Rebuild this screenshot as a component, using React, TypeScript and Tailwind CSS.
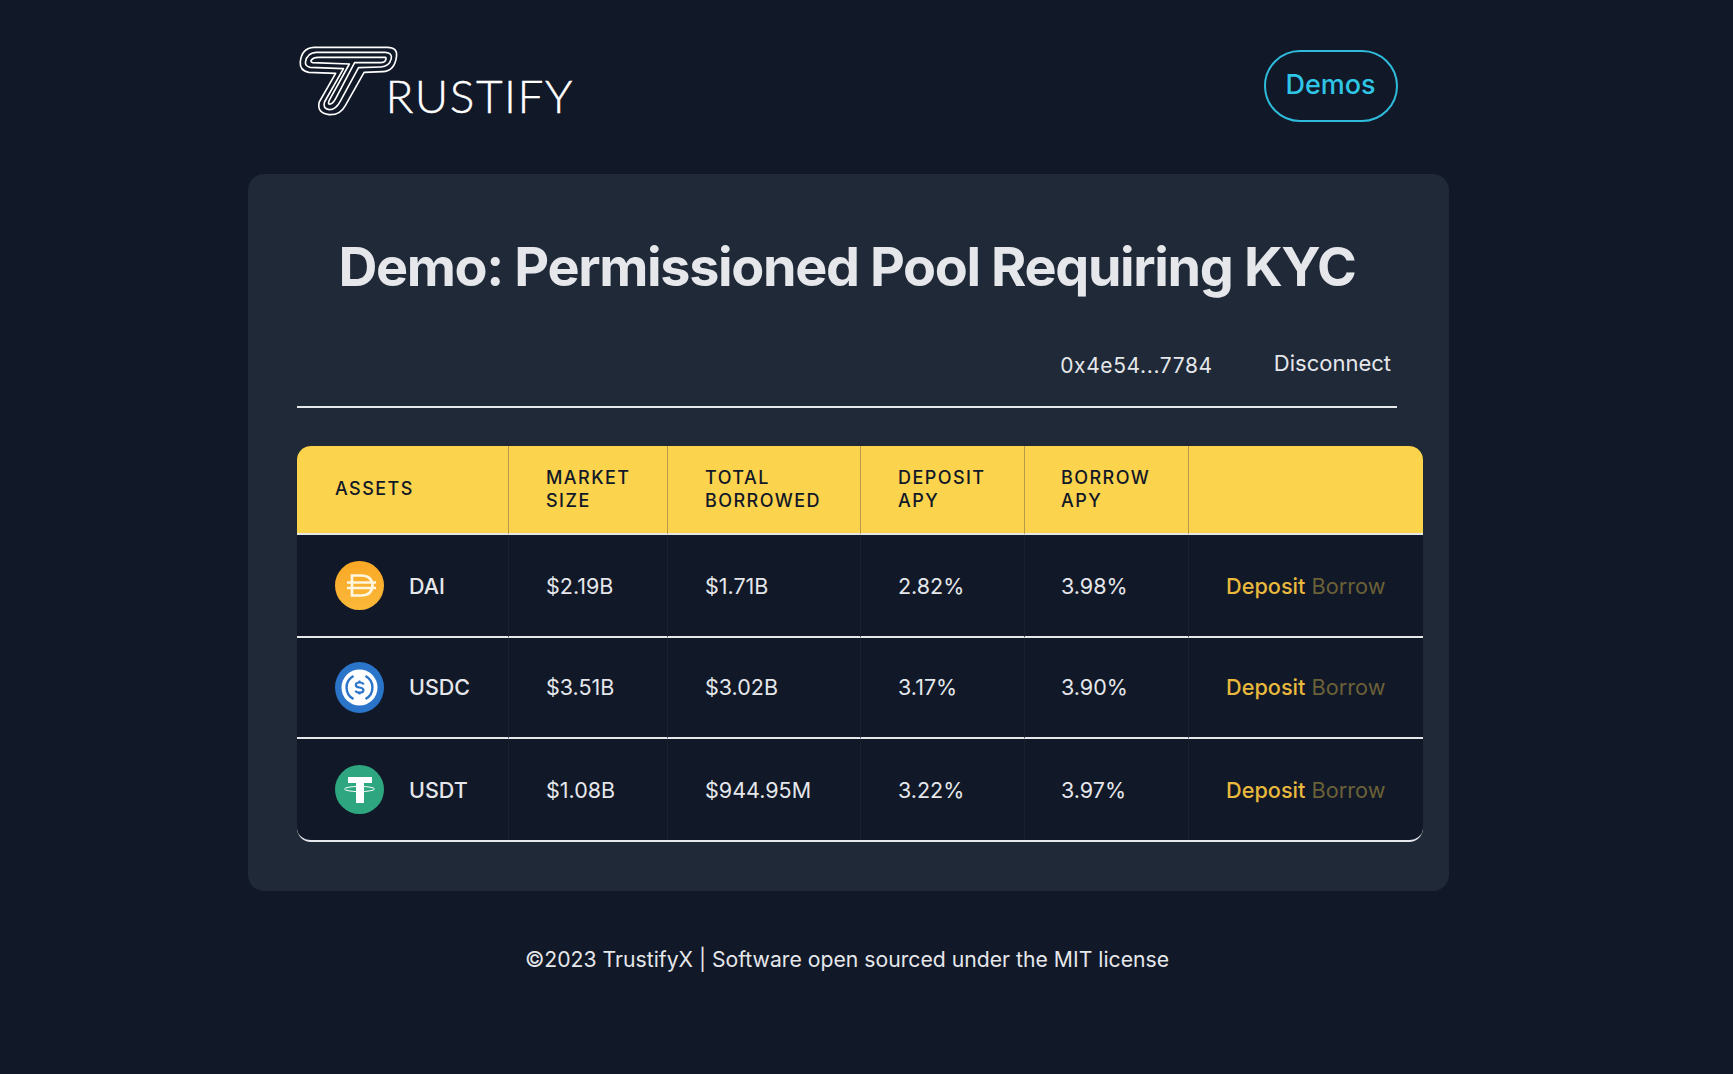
import React from "react";

function TLogo() {
  return (
    <svg width="108" height="85" viewBox="0 0 330 255" preserveAspectRatio="none" fill="none" stroke="#ffffff" strokeWidth="5" strokeLinejoin="round" className="shrink-0">
      <path d="M52 22 H276 Q308 22 304 50 Q298 94 262 95 L205 97 L148 196 Q132 226 98 224 Q60 220 68 186 L118 100 L36 97 Q8 92 10 66 Q14 24 52 22 Z" />
      <path d="M58 37 H270 Q292 39 288 56 Q282 80 256 81 L188 83 L132 184 Q118 210 98 209 Q78 206 84 186 L142 86 L40 82 Q24 78 26 66 Q30 39 58 37 Z" />
      <path d="M64 52 H270 Q274 54 270 62 Q266 68 256 68 H176 L118 176 Q108 194 98 192 Q94 190 100 178 L160 72 L48 68 Q40 66 44 60 Q50 52 64 52 Z" />
    </svg>
  );
}

function DaiIcon() {
  return (
    <svg width="49" height="49" viewBox="0 0 49 49" className="shrink-0">
      <defs>
        <linearGradient id="daiGrad" x1="0" y1="0" x2="0" y2="1">
          <stop offset="0" stopColor="#f9a825" />
          <stop offset="1" stopColor="#fbb83a" />
        </linearGradient>
      </defs>
      <circle cx="24.5" cy="24.5" r="24.5" fill="url(#daiGrad)" />
      <path d="M17 14.5 H26 Q37 14.5 37.5 24.5 Q37 34.5 26 34.5 H17 Z" fill="none" stroke="#fff6e0" strokeWidth="2.7" />
      <path d="M12 21.5 H41 M12 27 H41" stroke="#fff6e0" strokeWidth="2.6" fill="none" />
    </svg>
  );
}

function UsdcIcon() {
  return (
    <svg width="49" height="51" viewBox="0 0 49 51" className="shrink-0">
      <ellipse cx="24.5" cy="25.5" rx="24.5" ry="25.5" fill="#2a74c9" />
      <circle cx="24.5" cy="25.5" r="18" fill="#ffffff" />
      <path d="M18.5 14 A13 13 0 0 0 18.5 37 M30.5 14 A13 13 0 0 1 30.5 37" fill="none" stroke="#2a74c9" strokeWidth="2.4" />
      <path d="M28.5 22.5 Q28 20.5 24.5 20.5 Q20.8 20.5 20.8 23 Q20.8 25 24.5 25.5 Q28.4 26 28.4 28.2 Q28.4 30.6 24.5 30.6 Q21 30.6 20.6 28.6" fill="none" stroke="#2a74c9" strokeWidth="2.2" />
      <path d="M24.5 18.5 V21 M24.5 30 V32.5" fill="none" stroke="#2a74c9" strokeWidth="2" />
    </svg>
  );
}

function UsdtIcon() {
  return (
    <svg width="49" height="49" viewBox="0 0 49 49" className="shrink-0">
      <circle cx="24.5" cy="24.5" r="24.5" fill="#2ea67f" />
      <ellipse cx="24.5" cy="24" rx="15" ry="2.6" fill="none" stroke="#ffffff" strokeWidth="1" />
      <path d="M13 12 H37 V18 H29 V38 H21 V18 H13 Z" fill="#ffffff" />
    </svg>
  );
}

const rows = [
  { name: "DAI", icon: <DaiIcon />, size: "$2.19B", borrowed: "$1.71B", dep: "2.82%", bor: "3.98%", h: "h-[103px]", border: "border-b-2", tp: "pt-[2px]", np: "pt-[1px]" },
  { name: "USDC", icon: <UsdcIcon />, size: "$3.51B", borrowed: "$3.02B", dep: "3.17%", bor: "3.90%", h: "h-[101px]", border: "border-b-2", tp: "", np: "" },
  { name: "USDT", icon: <UsdtIcon />, size: "$1.08B", borrowed: "$944.95M", dep: "3.22%", bor: "3.97%", h: "h-[101px]", border: "", tp: "pt-[2px]", np: "pt-[1px]" },
];

const thCls = "pr-[20px] pb-[2px] text-left align-middle font-medium text-[18px] leading-[23px] tracking-[0.08em] text-[#111827] border-r border-[#b59b4a] border-b-2 border-b-[#e5e7eb]";
const tdCls = "border-r border-[#18212f] border-b-[#e5e7eb] pr-[10px]";

export default function App() {
  return (
    <div className="min-h-screen bg-[#111827] pr-[37px] font-['Inter',sans-serif] text-[#e5e7eb]">
      <div className="mx-auto flex w-[1201px] flex-col">
        <header className="flex h-[174px] items-start justify-between pl-[49px] pr-[51px] pt-[40px]">
          <div className="flex items-end">
            <TLogo />
            <span className="relative bottom-[6px] ml-[-19px] font-['Lato',sans-serif] text-[46px] font-light leading-[46px] tracking-[0.033em] text-white [-webkit-text-stroke:0.4px_white]">RUSTIFY</span>
          </div>
          <a className="mt-[10px] flex h-[72px] w-[134px] items-center justify-center rounded-full border-[2.5px] border-[#2fbcdc] pb-[2px] text-[27px] font-medium text-[#2fc5e6]">Demos</a>
        </header>
        <main className="rounded-2xl bg-[#1f2937] pb-[49px] pl-[49.5px] pr-[25.5px] pt-[54px]">
          <h1 className="mr-[26px] text-center text-[53.9px] font-bold leading-[78px] tracking-[-0.025em] text-[#e5e7eb]">Demo: Permissioned Pool Requiring KYC</h1>
          <div className="mr-[26px] mt-[42px] flex h-[60px] items-start justify-end border-b-2 border-[#e5e7eb] pr-[6px]">
            <span className="mr-[61px] mt-[3px] text-[21px] leading-[30px] tracking-[0.03em]">0x4e54...7784</span>
            <span className="text-[22px] leading-[30px]">Disconnect</span>
          </div>
          <div className="mt-[38px] w-[1126px] overflow-hidden rounded-[14px] border-b-2 border-[#e5e7eb] bg-[#111827]">
            <table className="w-full table-fixed border-separate border-spacing-0 text-[21.5px]">
              <colgroup>
                <col className="w-[212px]" />
                <col className="w-[159px]" />
                <col className="w-[193px]" />
                <col className="w-[164px]" />
                <col className="w-[164px]" />
                <col />
              </colgroup>
              <thead className="bg-[#fcd34d]">
                <tr className="h-[89px]">
                  <th className={`${thCls} pl-[38px]`}>ASSETS</th>
                  <th className={`${thCls} pl-[37px]`}>MARKET<br />SIZE</th>
                  <th className={`${thCls} pl-[37px]`}>TOTAL<br />BORROWED</th>
                  <th className={`${thCls} pl-[37px]`}>DEPOSIT<br />APY</th>
                  <th className={`${thCls} pl-[36px]`}>BORROW<br />APY</th>
                  <th className="border-b-2 border-b-[#e5e7eb]"></th>
                </tr>
              </thead>
              <tbody>
                {rows.map((r) => (
                  <tr key={r.name} className={r.h}>
                    <td className={`${tdCls} ${r.border} pl-[38px]`}>
                      <div className="flex items-center gap-[25px] font-medium">
                        {r.icon}
                        <span className={r.np}>{r.name}</span>
                      </div>
                    </td>
                    <td className={`${tdCls} ${r.border} ${r.tp} pl-[37px]`}>{r.size}</td>
                    <td className={`${tdCls} ${r.border} ${r.tp} pl-[37px]`}>{r.borrowed}</td>
                    <td className={`${tdCls} ${r.border} ${r.tp} pl-[37px]`}>{r.dep}</td>
                    <td className={`${tdCls} ${r.border} ${r.tp} pl-[36px]`}>{r.bor}</td>
                    <td className={`border-b-[#e5e7eb] pl-[37px] text-[21.7px] ${r.border} ${r.tp}`}>
                      <span className="font-medium text-[#e8b93c]">Deposit</span>{" "}
                      <span className="text-[#6b6138]">Borrow</span>
                    </td>
                  </tr>
                ))}
              </tbody>
            </table>
          </div>
        </main>
        <footer className="pr-[2px] pt-[54px] text-center text-[21.2px] leading-[28px] text-[#e5e7eb]">©2023 TrustifyX | Software open sourced under the MIT license</footer>
      </div>
    </div>
  );
}
